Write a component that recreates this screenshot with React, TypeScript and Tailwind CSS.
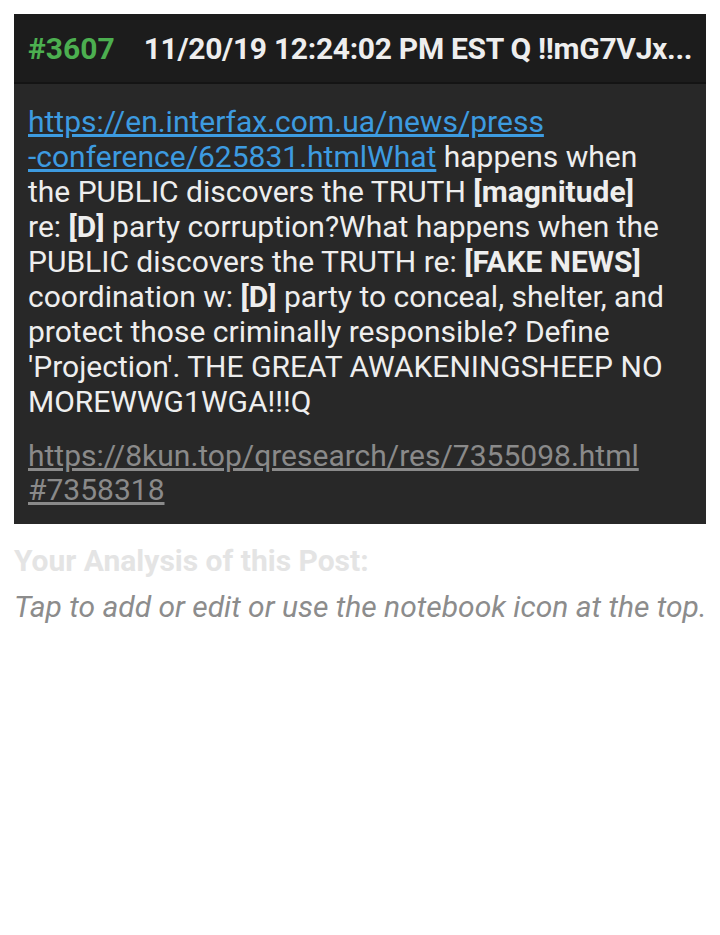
import React from "react";

const font = { fontFamily: "Roboto, 'Noto Sans', sans-serif" };

export default function App() {
  return (
    <div className="min-h-[935px] w-[720px] bg-white" style={font}>
      <div className="pt-[14px] px-[14px]">
        {/* post card */}
        <div className="bg-[#282828]">
          <div className="flex items-center h-[70px] px-[14px] bg-[#1c1c1c] border-b-2 border-[#141414] text-[30px] font-bold whitespace-nowrap overflow-hidden">
            <span className="text-[#4caf50]">#3607</span>
            <span className="ml-[29px] tracking-[-0.3px] text-[#eeeeee]">11/20/19 12:24:02 PM EST Q !!mG7VJx...</span>
          </div>
          <div className="px-[14px] pt-[20px] pb-[17px] text-[30px] whitespace-nowrap text-[#eeeeee]">
            <p className="leading-[35px]">
              <a className="text-[#3d9be0] underline">
                https://en.interfax.com.ua/news/press
                <br />
                -conference/625831.htmlWhat
              </a>{" "}
              happens when
              <br />
              the PUBLIC discovers the TRUTH <b>[magnitude]</b>
              <br />
              re: <b>[D]</b> party corruption?What happens when the
              <br />
              PUBLIC discovers the TRUTH re: <b>[FAKE NEWS]</b>
              <br />
              coordination w: <b>[D]</b> party to conceal, shelter, and
              <br />
              protect those criminally responsible? Define
              <br />
              'Projection'. THE GREAT AWAKENINGSHEEP NO
              <br />
              MOREWWG1WGA!!!Q
            </p>
            <p className="mt-[20px] leading-[34px]">
              <a className="text-[#8a8a8a] underline">
                https://8kun.top/qresearch/res/7355098.html
                <br />
                #7358318
              </a>
            </p>
          </div>
        </div>
        {/* analysis */}
        <div className="mt-[19px] text-[30px] leading-[36px] font-bold text-[#e4e4e4]">Your Analysis of this Post:</div>
        <div className="mt-[10px] text-[30px] leading-[36px] italic text-[#8c8c8c] whitespace-nowrap">
          Tap to add or edit or use the notebook icon at the top.
        </div>
      </div>
    </div>
  );
}
